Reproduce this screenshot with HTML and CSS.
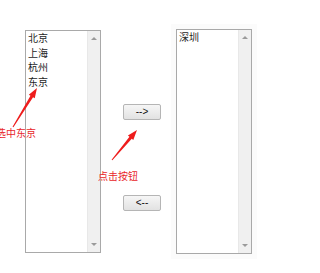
FILE: index.html
```html
<!DOCTYPE html>
<html lang="zh">
<head>
<meta charset="utf-8">
<link rel="stylesheet" href="styles.css">
</head>
<body>
<div class="stage">
  <div class="list">
    <ul class="items">
      <li>北京</li>
      <li>上海</li>
      <li>杭州</li>
      <li>东京</li>
    </ul>
    <div class="scrollbar"><span class="arr up"></span><span class="arr down"></span></div>
  </div>
  <div class="middle">
    <button class="btn btn-right">--&gt;</button>
    <button class="btn btn-left">&lt;--</button>
  </div>
  <div class="list list-target">
    <ul class="items">
      <li>深圳</li>
    </ul>
    <div class="scrollbar"><span class="arr up"></span><span class="arr down"></span></div>
  </div>
</div>
<div class="note note-select">选中东京</div>
<div class="note note-click">点击按钮</div>
<svg class="arrows" width="290" height="273" viewBox="0 0 290 273">
  <polygon points="12.57,126.74 30.48,95.72 28.78,94.68 37,88 34.74,98.34 33.04,97.3 13.43,127.26" />
  <polygon points="111.62,159.68 129.45,136.72 127.91,135.44 137,130 133.29,139.92 131.75,138.64 112.38,160.32" />
</svg>
</body>
</html>
```
FILE: styles.css
```css
html, body {
  margin: 0;
  padding: 0;
  background: #ffffff;
  width: 290px;
  height: 273px;
  overflow: hidden;
  position: relative;
  font-family: "Noto Sans CJK SC", "Noto Sans", sans-serif;
}
.stage {
  display: flex;
  align-items: flex-start;
  padding: 30px 0 0 25px;
}
.list {
  width: 76px;
  height: 223px;
  box-sizing: border-box;
  border: 1px solid #a9a9a9;
  background: #fff;
  display: flex;
}
.list-target {
  margin-top: -1px;
  height: 225px;
  box-shadow: 0 0 0 5px #fbfbfb;
}
.items {
  list-style: none;
  margin: 0;
  padding: 0 0 0 2px;
  flex: 1;
  font-size: 10px;
  line-height: 14.5px;
  color: #1e1e1e;
}
.scrollbar {
  width: 12px;
  background: #f0f0f0;
  border-left: 1px solid #e8e8e8;
  display: flex;
  flex-direction: column;
  justify-content: space-between;
  align-items: center;
  padding: 6px 0;
}
.arr {
  width: 0;
  height: 0;
  border-left: 3px solid transparent;
  border-right: 3px solid transparent;
}
.arr.up { border-bottom: 3px solid #9a9a9a; }
.arr.down { border-top: 3px solid #9a9a9a; }
.middle {
  width: 75px;
  display: flex;
  flex-direction: column;
  align-items: flex-start;
  padding: 74px 0 0 22px;
  box-sizing: border-box;
  gap: 75px;
}
.btn {
  width: 38px;
  height: 16px;
  padding: 0;
  margin: 0;
  border: 1px solid #b5b5b5;
  border-radius: 2px;
  background: linear-gradient(#f6f6f6, #e2e2e2);
  font-family: "Liberation Sans", sans-serif;
  font-size: 10px;
  line-height: 14px;
  color: #111;
}
.note {
  position: absolute;
  color: #e8262a;
  font-size: 10px;
  line-height: 12px;
  white-space: nowrap;
}
.note-select { left: -4px; top: 127px; }
.note-click { left: 98px; top: 170px; }
.arrows {
  position: absolute;
  left: 0;
  top: 0;
}
.arrows polygon { fill: #ee1c1c; }
```
